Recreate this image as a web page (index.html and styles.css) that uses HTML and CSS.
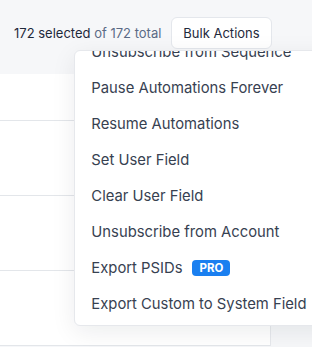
FILE: index.html
```html
<!DOCTYPE html>
<html lang="en">
<head>
    <meta charset="UTF-8">
    <title>Bulk Actions</title>
    <link rel="stylesheet" href="styles.css">
</head>
<body>
<div class="page">
    <div class="toolbar">
        <span class="count">172 selected <span class="muted">of 172 total</span></span>
        <div class="bulk">
            <button class="btn">Bulk Actions</button>
            <div class="menu">
                <ul class="menu-list">
                    <li>Unsubscribe from Sequence</li>
                    <li>Pause Automations Forever</li>
                    <li>Resume Automations</li>
                    <li>Set User Field</li>
                    <li>Clear User Field</li>
                    <li>Unsubscribe from Account</li>
                    <li>Export PSIDs <span class="pro">PRO</span></li>
                    <li>Export Custom to System Field</li>
                </ul>
            </div>
        </div>
    </div>
    <div class="table">
        <div class="row"></div>
        <div class="row"></div>
        <div class="row"></div>
        <div class="row"></div>
    </div>
</div>
</body>
</html>
```

FILE: styles.css
```css
html * {
    box-sizing: border-box;
}

body {
    margin: 0;
    background: #f6f7f9;
    font-family: Inter, "Noto Sans", sans-serif;
    color: #1e293b;
    overflow: hidden;
}

.page {
    width: 312px;
    height: 347px;
}

.toolbar {
    display: flex;
    align-items: center;
    gap: 10px;
    height: 74px;
    padding: 0 0 8px 14px;
}

.count {
    font-size: 13px;
}

.muted {
    color: #5b6b86;
}

.bulk {
    position: relative;
}

.btn {
    font-family: inherit;
    font-size: 13px;
    color: #1e293b;
    background: #fff;
    border: 1px solid #e4e7ec;
    border-radius: 6px;
    height: 32px;
    padding: 0 11px;
}

.menu {
    position: absolute;
    top: 33px;
    left: -97px;
    width: 270px;
    height: 276px;
    background: #fff;
    border: 1px solid #e6e8ec;
    border-radius: 6px;
    box-shadow: 0 6px 24px rgba(15, 23, 42, 0.08);
    overflow: hidden;
    z-index: 2;
}

.menu-list {
    list-style: none;
    margin: -17px 0 0;
    padding: 0;
}

.menu-list li {
    display: flex;
    align-items: center;
    gap: 10px;
    height: 36px;
    padding: 0 16px;
    font-size: 14.8px;
    color: #374151;
    white-space: nowrap;
}

.pro {
    background: #1a7ff0;
    color: #fff;
    font-size: 11.5px;
    font-weight: 700;
    border-radius: 4px;
    padding: 1px 7px;
    line-height: 14px;
}

.table {
    width: 271px;
    background: #fff;
    border-right: 1px solid #e6e8ec;
}

.row {
    height: 75px;
    border-bottom: 1px solid #e3e6ea;
}

.row:first-child {
    height: 47px;
}
```
